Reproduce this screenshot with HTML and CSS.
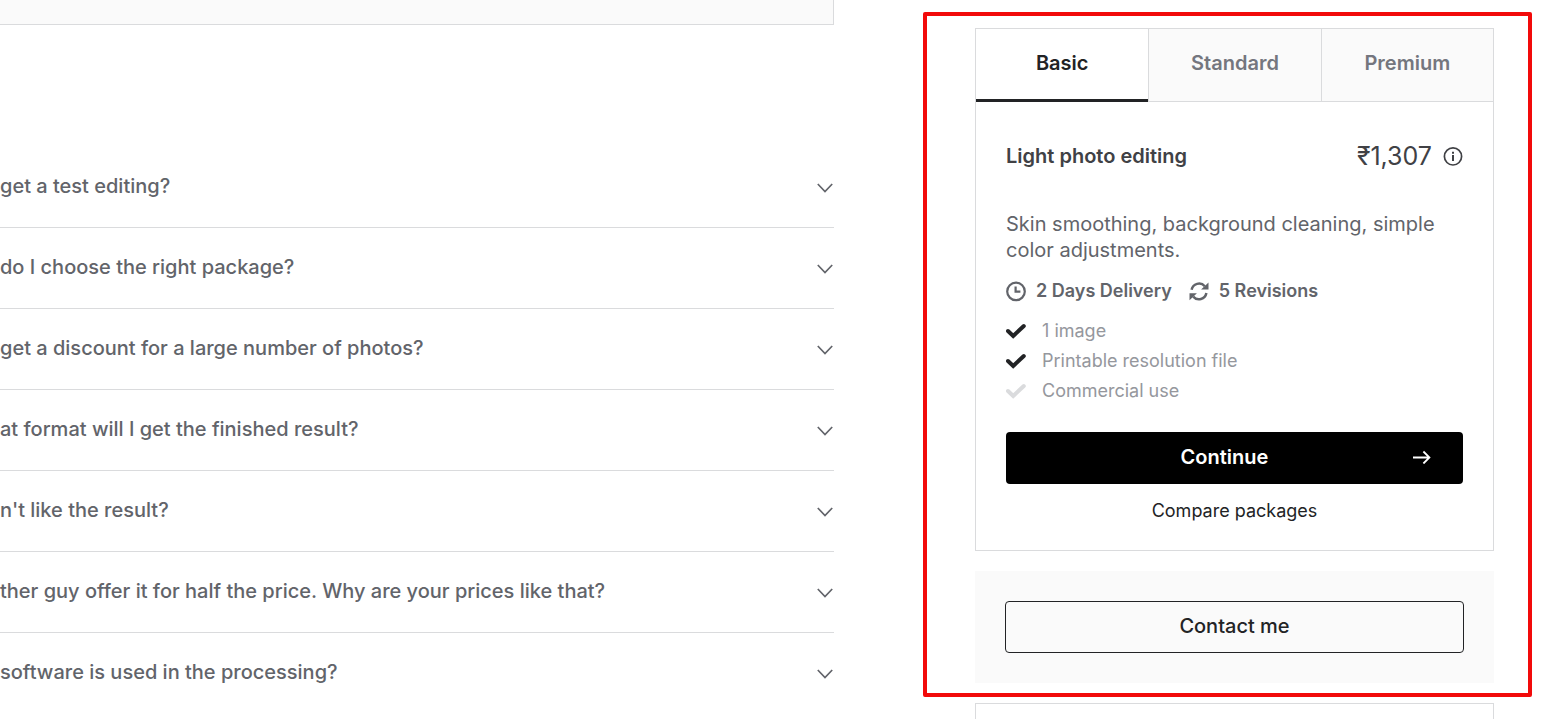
FILE: index.html
```html
<!DOCTYPE html>
<html lang="en">
<head>
<meta charset="utf-8">
<meta name="viewport" content="width=device-width, initial-scale=1">
<title>Light photo editing</title>
<link rel="stylesheet" href="styles.css">
</head>
<body>
<svg class="sprite" aria-hidden="true">
  <symbol id="chevron" viewBox="0 0 16 10"><path d="M.8 1 8 8.6 15.2 1" fill="none" stroke="currentColor" stroke-width="1.7"/></symbol>
  <symbol id="check" viewBox="0 0 20 16"><path d="M2 8 7.2 13 17.8 3" fill="none" stroke="currentColor" stroke-width="4" stroke-linecap="round"/></symbol>
</svg>
<div class="page">
  <main class="content">
    <div class="panel-end"></div>
    <section class="faq" aria-label="FAQ">
      <button class="faq-item" type="button"><span>get a test editing?</span><svg class="chevron"><use href="#chevron"/></svg></button>
      <button class="faq-item" type="button"><span>do I choose the right package?</span><svg class="chevron"><use href="#chevron"/></svg></button>
      <button class="faq-item" type="button"><span>get a discount for a large number of photos?</span><svg class="chevron"><use href="#chevron"/></svg></button>
      <button class="faq-item" type="button"><span>at format will I get the finished result?</span><svg class="chevron"><use href="#chevron"/></svg></button>
      <button class="faq-item" type="button"><span>n't like the result?</span><svg class="chevron"><use href="#chevron"/></svg></button>
      <button class="faq-item" type="button"><span>ther guy offer it for half the price. Why are your prices like that?</span><svg class="chevron"><use href="#chevron"/></svg></button>
      <button class="faq-item" type="button"><span>software is used in the processing?</span><svg class="chevron"><use href="#chevron"/></svg></button>
    </section>
  </main>
  <aside class="sidebar">
    <div class="highlight"></div>
    <section class="package">
      <div class="tabs" role="tablist">
        <button class="tab tab-active" type="button" role="tab" aria-selected="true">Basic</button>
        <button class="tab" type="button" role="tab" aria-selected="false">Standard</button>
        <button class="tab" type="button" role="tab" aria-selected="false">Premium</button>
      </div>
      <div class="details">
        <header class="heading">
          <h3 class="title">Light photo editing</h3>
          <div class="price">
            <span>₹1,307</span>
            <svg class="info" viewBox="0 0 20 20" role="img" aria-label="Price information"><circle cx="10" cy="10.4" r="8.6" fill="none" stroke="currentColor" stroke-width="1.7"/><path d="M9 5.8h2v2H9zM9 9h2v6H9z" fill="currentColor"/></svg>
          </div>
        </header>
        <p class="description">Skin smoothing, background cleaning, simple color adjustments.</p>
        <div class="meta">
          <span class="meta-item"><svg class="meta-icon" viewBox="0 0 20 20"><circle cx="10" cy="10.4" r="8.8" fill="none" stroke="currentColor" stroke-width="2.2"/><path d="M9.6 5.4v5.2H14.4" fill="none" stroke="currentColor" stroke-width="2.2"/></svg>2 Days Delivery</span>
          <span class="meta-item"><svg class="meta-icon" viewBox="0 0 20 20"><path d="M2.6 8.8A7.6 7.6 0 0 1 15.8 5.2M17.4 12A7.6 7.6 0 0 1 4.2 15.6" fill="none" stroke="currentColor" stroke-width="2.5"/><path d="M19.5 1.6v7h-7.4zM.5 19.2v-7h7.4z" fill="currentColor"/></svg>5 Revisions</span>
        </div>
        <ul class="features">
          <li class="feature"><svg class="check"><use href="#check"/></svg>1 image</li>
          <li class="feature"><svg class="check"><use href="#check"/></svg>Printable resolution file</li>
          <li class="feature"><svg class="check check-off"><use href="#check"/></svg>Commercial use</li>
        </ul>
        <button class="continue" type="button"><span>Continue</span><svg class="arrow" viewBox="0 0 18 14"><path d="M0 7.5h16M10.4 1.5l6 6-6 6" fill="none" stroke="currentColor" stroke-width="1.8"/></svg></button>
        <a class="compare" href="#compare">Compare packages</a>
      </div>
    </section>
    <section class="contact">
      <button class="contact-button" type="button">Contact me</button>
    </section>
    <section class="next-card"></section>
  </aside>
</div>
</body>
</html>
```
FILE: styles.css
```css
* { box-sizing: border-box; }
body {
  margin: 0;
  background: #fff;
  color: #62646a;
  font-family: Inter, "Liberation Sans", sans-serif;
  font-size: 18px;
}
button {
  margin: 0;
  padding: 0;
  border: 0;
  background: none;
  color: inherit;
  font: inherit;
  cursor: pointer;
}
.sprite { position: absolute; width: 0; height: 0; }
.page {
  display: grid;
  grid-template-columns: minmax(0, 1fr) 519px;
  column-gap: 141px;
  height: 100vh;
  padding-right: 48px;
  overflow: hidden;
}
.panel-end {
  height: 25px;
  background: #fafafa;
  border: 1px solid #dadbdd;
  border-width: 0 1px 1px 0;
}
.faq { display: flex; flex-direction: column; margin-top: 122px; }
.faq-item {
  display: flex;
  align-items: center;
  justify-content: space-between;
  height: 81px;
  padding-bottom: 2px;
  border-bottom: 1px solid #dadbdd;
  font-size: 20px;
  font-weight: 500;
  text-align: left;
}
.faq-item:last-child { border-bottom-color: transparent; }
.chevron { width: 16px; height: 10px; margin: 3px 1px 0 0; }

.sidebar { position: relative; padding-top: 28px; }
.highlight {
  position: absolute;
  top: 12px;
  left: -52px;
  right: -38px;
  height: 685px;
  border: 4px solid #f20a0a;
  border-radius: 2px;
  pointer-events: none;
}
.package { border: 1px solid #dadbdd; }
.tabs { display: grid; grid-template-columns: repeat(3, 1fr); }
.tab {
  height: 73px;
  padding-bottom: 5px;
  background: #fafafa;
  border-bottom: 1px solid #dadbdd;
  color: #74767e;
  font-size: 20px;
  font-weight: 600;
}
.tab + .tab { border-left: 1px solid #dadbdd; }
.tab-active {
  padding-bottom: 3px;
  background: #fff;
  border-bottom: 3px solid #222325;
  color: #222325;
}
.details {
  display: flex;
  flex-direction: column;
  padding: 38px 30px 27px;
}
.heading {
  display: flex;
  align-items: center;
  justify-content: space-between;
  height: 32px;
  color: #404145;
}
.title { margin: 0; font-size: 20px; font-weight: 600; }
.price { display: flex; align-items: center; gap: 11px; font-size: 25px; }
.info { width: 20px; height: 20px; }
.description { margin: 39px 0 0; font-size: 20px; line-height: 26px; }
.meta {
  display: flex;
  gap: 17px;
  margin-top: 15px;
  font-weight: 600;
  line-height: 26px;
}
.meta-item { display: flex; align-items: center; gap: 10px; }
.meta-icon { width: 20px; height: 20px; overflow: visible; }
.features {
  margin: 12px 0 0;
  padding: 0;
  color: #95979d;
  line-height: 30px;
  list-style: none;
}
.feature { display: flex; align-items: center; gap: 16px; }
.check { width: 20px; height: 16px; color: #222325; }
.check-off { color: #dadbdd; }
.continue {
  display: grid;
  grid-template-columns: 1fr auto 1fr;
  align-items: center;
  height: 52px;
  margin-top: 26px;
  padding: 0 32px 2px 12px;
  background: #000;
  border-radius: 4px;
  color: #fff;
  font-size: 20px;
  font-weight: 600;
}
.continue span { grid-column: 2; }
.arrow { grid-column: 3; justify-self: end; width: 18px; height: 14px; }
.compare {
  align-self: center;
  margin-top: 15px;
  color: #222325;
  line-height: 24px;
  text-decoration: none;
}
.contact { margin-top: 20px; padding: 30px; background: #fafafa; }
.contact-button {
  width: 100%;
  height: 52px;
  padding-bottom: 2px;
  border: 1px solid #222325;
  border-radius: 4px;
  color: #222325;
  font-size: 20px;
  font-weight: 500;
}
.next-card { height: 120px; margin-top: 20px; border: 1px solid #dadbdd; }
```
